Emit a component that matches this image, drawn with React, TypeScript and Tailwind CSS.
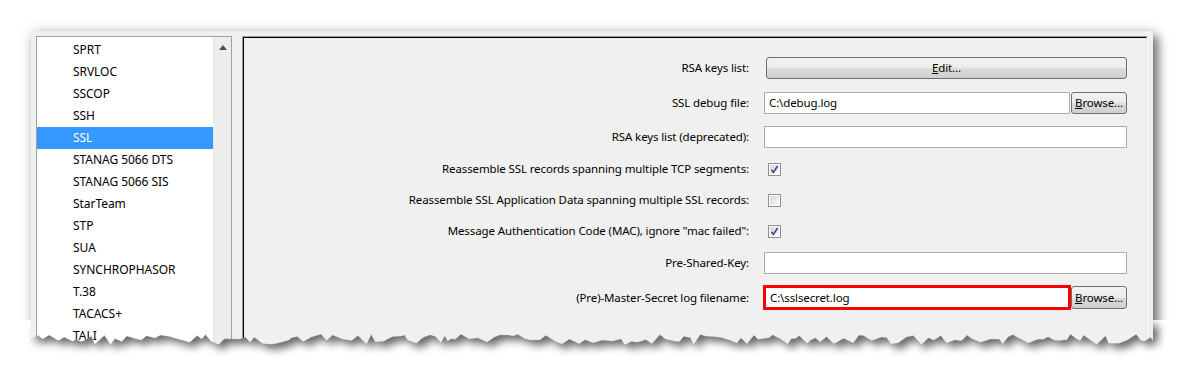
import React from "react";

const protocols = [
  "SPRT",
  "SRVLOC",
  "SSCOP",
  "SSH",
  "SSL",
  "STANAG 5066 DTS",
  "STANAG 5066 SIS",
  "StarTeam",
  "STP",
  "SUA",
  "SYNCHROPHASOR",
  "T.38",
  "TACACS+",
  "TALI",
];

const Checkbox = ({ checked }: { checked: boolean }) => (
  <span className="ml-[4px] flex h-[13px] w-[13px] border border-[#8f8f8f] bg-white p-px">
    <span className="flex flex-1 items-center justify-center bg-[linear-gradient(135deg,#d6d6d6,#fbfbfb)]">
      {checked && (
        <svg width="9" height="9" viewBox="0 0 9 9">
          <path
            d="M1.5 4.8 L3.4 7.4 L7.6 1"
            fill="none"
            stroke="#34498f"
            strokeWidth="1.6"
          />
        </svg>
      )}
    </span>
  </span>
);

const Button = ({
  hot,
  rest,
  className,
}: {
  hot: string;
  rest: string;
  className: string;
}) => (
  <div
    className={
      "flex items-center justify-center rounded-[3px] border border-[#707070] bg-[linear-gradient(#f2f2f2,#ebebeb_50%,#dddddd_50%,#cfcfcf)] text-black " +
      className
    }
  >
    <span>
      <span className="underline">{hot}</span>
      {rest}
    </span>
  </div>
);

const TextBox = ({ value, className }: { value?: string; className: string }) => (
  <div
    className={
      "flex items-center border border-[#abadb3] bg-white pl-[4px] text-black " +
      className
    }
  >
    {value}
  </div>
);

const Row = ({
  label,
  className,
  children,
}: {
  label: string;
  className: string;
  children: React.ReactNode;
}) => (
  <div className={"flex items-center " + className}>
    <div className="w-[505px] shrink-0 text-right text-black">{label}</div>
    <div className="ml-[15px] flex items-center">{children}</div>
  </div>
);

// pseudo random torn edge
const tornEdge = () => {
  let seed = 7;
  const rnd = () => {
    seed = (seed * 9301 + 49297) % 233280;
    return seed / 233280;
  };
  const pts: string[] = [];
  let x = 31;
  while (x < 1153) {
    pts.push(`${x.toFixed(1)},${(14 + rnd() * 11).toFixed(1)}`);
    x += 3 + rnd() * 7;
  }
  pts.push("1153,20");
  return pts;
};

const TornBottom = () => {
  const edge = tornEdge();
  const above = `31,0 1153,0 ${edge.slice().reverse().join(" ")}`;
  return (
    <svg
      className="absolute left-0 top-[320px]"
      width="1183"
      height="62"
      viewBox="0 0 1183 62"
    >
      <defs>
        <filter id="blur" x="-10%" y="-100%" width="120%" height="400%">
          <feGaussianBlur stdDeviation="4.5" />
        </filter>
        <mask id="outside">
          <rect width="1183" height="62" fill="white" />
          <polygon points={above} fill="black" />
        </mask>
      </defs>
      <g mask="url(#outside)">
        <rect width="1183" height="62" fill="white" />
        <polygon
          points={above}
          fill="#000"
          opacity="0.6"
          filter="url(#blur)"
          transform="translate(5 5)"
        />
        <polyline
          points={edge.join(" ")}
          fill="none"
          stroke="#a4a4a4"
          strokeWidth="1"
        />
      </g>
    </svg>
  );
};

export default function App() {
  return (
    <div className="relative h-[382px] w-[1183px] overflow-hidden bg-white pl-[31px] pt-[31px] font-['Noto_Sans','Open_Sans',sans-serif] text-[11.5px] tracking-[-0.12px]">
      <div className="flex h-[320px] w-[1122px] bg-[#f0f0f0] pl-[5px] pr-[5px] pt-[5px] shadow-[5px_5px_10px_rgba(0,0,0,0.55),0_0_14px_rgba(0,0,0,0.12)]">
        {/* protocol list */}
        <div className="flex h-[330px] w-[196px] border border-[#a0a0a0] bg-white">
          <div className="w-[176px] pt-[2px] text-[12px] tracking-[-0.05px]">
            {protocols.map((p) => (
              <div
                key={p}
                className={
                  "flex h-[22px] items-center pl-[36px] " +
                  (p === "SSL" ? "bg-[#3399ff] text-white" : "text-black")
                }
              >
                {p}
              </div>
            ))}
          </div>
          <div className="flex w-[18px] justify-center border-l border-[#e6e6e6] bg-[#ededed] pt-[8px]">
            <svg width="8" height="5" viewBox="0 0 8 5">
              <polygon points="4,0 8,5 0,5" fill="#505050" />
            </svg>
          </div>
        </div>

        {/* preferences panel */}
        <div className="ml-[10px] flex h-[330px] w-[906px] border-l border-t border-r border-[#a0a0a0] border-r-white">
          <div className="flex-1 border-l border-t border-r border-black border-r-[#e3e3e3] bg-[#f0f0f0]">
            <Row label="RSA keys list:" className="mt-[19px] h-[22px]">
              <Button hot="E" rest="dit..." className="ml-[2px] h-[22px] w-[361px]" />
            </Row>
            <Row label="SSL debug file:" className="mt-[13px] h-[22px]">
              <TextBox value="C:\debug.log" className="h-[22px] w-[306px]" />
              <Button hot="B" rest="rowse..." className="ml-[1px] h-[22px] w-[56px]" />
            </Row>
            <Row label="RSA keys list (deprecated):" className="mt-[12px] h-[22px]">
              <TextBox className="h-[22px] w-[363px]" />
            </Row>
            <Row
              label="Reassemble SSL records spanning multiple TCP segments:"
              className="mt-[10px] h-[22px]"
            >
              <Checkbox checked />
            </Row>
            <Row
              label="Reassemble SSL Application Data spanning multiple SSL records:"
              className="mt-[9px] h-[22px]"
            >
              <Checkbox checked={false} />
            </Row>
            <Row
              label={'Message Authentication Code (MAC), ignore "mac failed":'}
              className="mt-[9px] h-[22px]"
            >
              <Checkbox checked />
            </Row>
            <Row label="Pre-Shared-Key:" className="mt-[10px] h-[22px]">
              <TextBox className="h-[22px] w-[363px]" />
            </Row>
            <Row
              label="(Pre)-Master-Secret log filename:"
              className="mt-[11px] h-[25px]"
            >
              <TextBox
                value="C:\sslsecret.log"
                className="-ml-px h-[25px] w-[308px] border-[3px] border-[#ff0000] pl-[2px]"
              />
              <Button hot="B" rest="rowse..." className="h-[23px] w-[56px]" />
            </Row>
          </div>
        </div>
      </div>
      <TornBottom />
    </div>
  );
}
